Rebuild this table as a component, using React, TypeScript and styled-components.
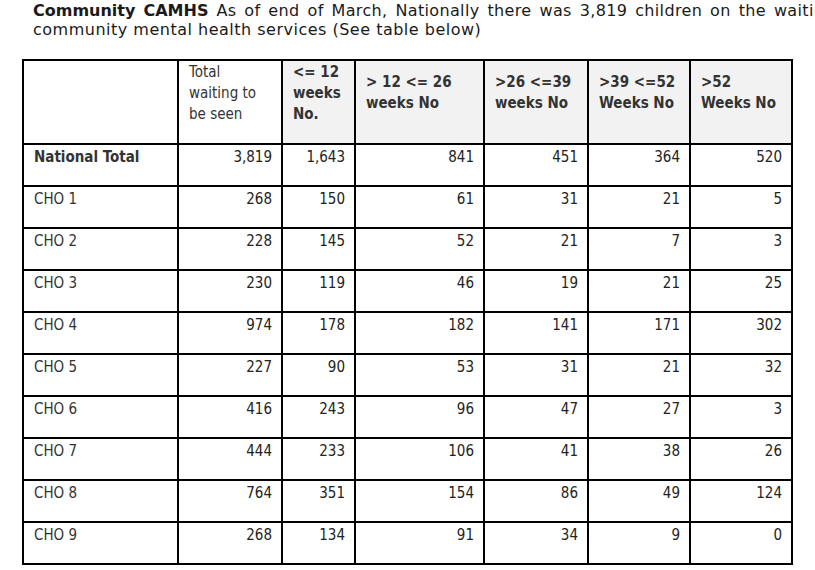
import React from "react";
import styled, { createGlobalStyle } from "styled-components";

const GlobalStyle = createGlobalStyle`
  html, body {
    margin: 0;
    padding: 0;
    background: #ffffff;
    overflow: hidden;
  }
  body {
    font-family: "DejaVu Sans", Verdana, sans-serif;
  }
`;

type Row = { label: string; values: string[]; bold?: boolean };

const rows: Row[] = [
  { label: "National Total", values: ["3,819", "1,643", "841", "451", "364", "520"], bold: true },
  { label: "CHO 1", values: ["268", "150", "61", "31", "21", "5"] },
  { label: "CHO 2", values: ["228", "145", "52", "21", "7", "3"] },
  { label: "CHO 3", values: ["230", "119", "46", "19", "21", "25"] },
  { label: "CHO 4", values: ["974", "178", "182", "141", "171", "302"] },
  { label: "CHO 5", values: ["227", "90", "53", "31", "21", "32"] },
  { label: "CHO 6", values: ["416", "243", "96", "47", "27", "3"] },
  { label: "CHO 7", values: ["444", "233", "106", "41", "38", "26"] },
  { label: "CHO 8", values: ["764", "351", "154", "86", "49", "124"] },
  { label: "CHO 9", values: ["268", "134", "91", "34", "9", "0"] },
];

const widths = [155, 104, 73, 129, 104, 102, 102];

const headers = [
  { lines: ["Total", "waiting to", "be seen"], shaded: false, bold: false, offset: 0 },
  { lines: ["<= 12", "weeks", "No."], shaded: true, bold: true, offset: 0 },
  { lines: ["> 12 <= 26", "weeks No"], shaded: true, bold: true, offset: 10 },
  { lines: [">26 <=39", "weeks No"], shaded: true, bold: true, offset: 10 },
  { lines: [">39 <=52", "Weeks No"], shaded: true, bold: true, offset: 10 },
  { lines: [">52", "Weeks No"], shaded: true, bold: true, offset: 10 },
];

const App = () => {
  return (
    <>
      <GlobalStyle />
      <Page>
        <Intro>
          <IntroLine $spread>
            <Lead>Community CAMHS</Lead> As of end of March, Nationally there was 3,819 children on
            the waiting list for
          </IntroLine>
          <IntroLine>community mental health services (See table below)</IntroLine>
        </Intro>
        <Table>
          <colgroup>
            {widths.map((w, i) => (
              <col key={i} style={{ width: w }} />
            ))}
          </colgroup>
          <thead>
            <HeadRow>
              <HeadCell />
              {headers.map((h, i) => (
                <HeadCell key={i} $shaded={h.shaded} $bold={h.bold} $offset={h.offset}>
                  {h.lines.map((l, j) => (
                    <div key={j}>{l}</div>
                  ))}
                </HeadCell>
              ))}
            </HeadRow>
          </thead>
          <tbody>
            {rows.map((r) => (
              <BodyRow key={r.label}>
                <LabelCell $bold={r.bold}>{r.label}</LabelCell>
                {r.values.map((v, i) => (
                  <NumCell key={i}>{v}</NumCell>
                ))}
              </BodyRow>
            ))}
          </tbody>
        </Table>
      </Page>
    </>
  );
};

const Page = styled.div`
  padding: 1px 0 0 22px;
  width: 1000px;
`;

const Intro = styled.div`
  padding-left: 11px;
  font-size: 16px;
  line-height: 19px;
  color: #1a1a1a;
  margin-bottom: 20px;
`;

const IntroLine = styled.div<{ $spread?: boolean }>`
  white-space: nowrap;
  letter-spacing: ${(p) => (p.$spread ? "0.35px" : "0.5px")};
  word-spacing: ${(p) => (p.$spread ? "2.5px" : "0")};
`;

const Lead = styled.strong`
  font-weight: bold;
  letter-spacing: 0;
`;

const Table = styled.table`
  border-collapse: collapse;
  table-layout: fixed;
  width: 769px;
  font-family: "DejaVu Sans Condensed", "DejaVu Sans", Tahoma, sans-serif;
  font-size: 15px;
  color: #222;
  td,
  th {
    border: 2px solid #000;
  }
`;

const HeadRow = styled.tr`
  height: 84px;
`;

const BodyRow = styled.tr`
  height: 42px;
`;

const HeadCell = styled.th<{ $shaded?: boolean; $bold?: boolean; $offset?: number }>`
  vertical-align: top;
  text-align: left;
  padding: ${(p) => 1 + (p.$offset || 0)}px 6px 0 10px;
  background: ${(p) => (p.$shaded ? "#f2f2f2" : "#ffffff")};
  font-weight: ${(p) => (p.$bold ? "bold" : "normal")};
  color: #333;
  line-height: 21px;
`;

const LabelCell = styled.td<{ $bold?: boolean }>`
  vertical-align: top;
  padding: 3px 8px 0 10px;
  font-weight: ${(p) => (p.$bold ? "bold" : "normal")};
  color: #333;
`;

const NumCell = styled.td`
  vertical-align: top;
  text-align: right;
  padding: 3px 9px 0 6px;
  color: #222;
`;

export default App;
